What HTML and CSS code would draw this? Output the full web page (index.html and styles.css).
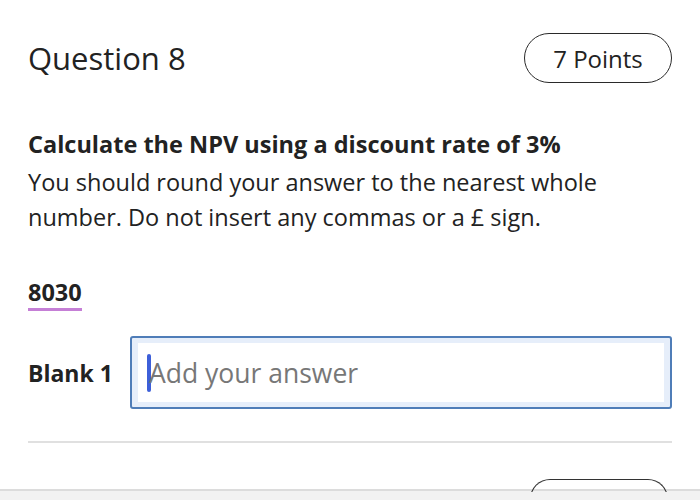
FILE: index.html
```html
<!DOCTYPE html>
<html>
<head>
<meta charset="utf-8">
<link rel="stylesheet" href="styles.css">
</head>
<body>
<div class="page">
  <div class="header">
    <h1 class="title">Question 8</h1>
    <div class="points">7 Points</div>
  </div>
  <div class="question">
    <p class="q-bold">Calculate the NPV using a discount rate of 3%</p>
    <p class="q-text">You should round your answer to the nearest whole number. Do not insert any commas or a £ sign.</p>
  </div>
  <div class="answer-tag">8030</div>
  <div class="blank-row">
    <label class="blank-label">Blank 1</label>
    <div class="input-outer">
      <div class="input-inner">
        <span class="caret"></span>
        <span class="placeholder">Add your answer</span>
      </div>
    </div>
  </div>
  <div class="separator"></div>
  <div class="footer">
    <div class="footer-btn"></div>
  </div>
</div>
</body>
</html>
```
FILE: styles.css
```css
html, body {
  margin: 0;
  padding: 0;
  background: #ffffff;
}
body {
  font-family: "Open Sans", "Noto Sans", sans-serif;
  color: #222222;
  width: 700px;
  height: 500px;
  overflow: hidden;
}
.page {
  position: relative;
  height: 500px;
  padding: 0 28px;
  box-sizing: border-box;
}
.header {
  display: flex;
  justify-content: space-between;
  align-items: center;
  padding-top: 33px;
}
.title {
  margin: 0;
  font-size: 31px;
  font-weight: 400;
  line-height: 50px;
}
.points {
  box-sizing: border-box;
  height: 50px;
  width: 148px;
  border: 1.5px solid #2a2a2a;
  border-radius: 25px;
  font-size: 24px;
  display: flex;
  align-items: center;
  justify-content: center;
}
.question {
  margin-top: 46px;
}
.q-bold {
  margin: 0;
  font-size: 23.5px;
  font-weight: 700;
  line-height: 30px;
  white-space: nowrap;
}
.q-text {
  margin: 6px 0 0;
  font-size: 23.5px;
  line-height: 35px;
  width: 620px;
}
.answer-tag {
  display: inline-block;
  margin-top: 44px;
  font-size: 23.5px;
  font-weight: 700;
  line-height: 26px;
  padding-bottom: 3px;
  border-bottom: 3px solid #c57fd6;
}
.blank-row {
  display: flex;
  align-items: center;
  margin-top: 25px;
}
.blank-label {
  font-size: 23px;
  font-weight: 700;
  width: 102px;
}
.input-outer {
  flex: 1;
  box-sizing: border-box;
  height: 73px;
  border: 2px solid #4f7db8;
  border-radius: 3px;
  background: #e6eefa;
  padding: 5px 6px;
}
.input-inner {
  height: 100%;
  background: #ffffff;
  display: flex;
  align-items: center;
  padding-left: 9px;
}
.caret {
  width: 4px;
  height: 38px;
  background: #3d5fd9;
  border-radius: 2px;
}
.placeholder {
  font-size: 26.5px;
  color: #777777;
  margin-left: -2px;
}
.separator {
  margin-top: 32px;
  height: 2px;
  background: #e0e0e0;
}
.footer {
  position: absolute;
  left: 0;
  right: 0;
  top: 489px;
  height: 11px;
  background: #f2f2f2;
  border-top: 2px solid #dcdcdc;
}
.footer-btn {
  position: absolute;
  left: 530px;
  top: -12px;
  width: 136px;
  height: 40px;
  border: 1.5px solid #333;
  border-radius: 20px;
  border-bottom: none;
  background: transparent;
  clip-path: inset(0 0 28px 0);
}
```
